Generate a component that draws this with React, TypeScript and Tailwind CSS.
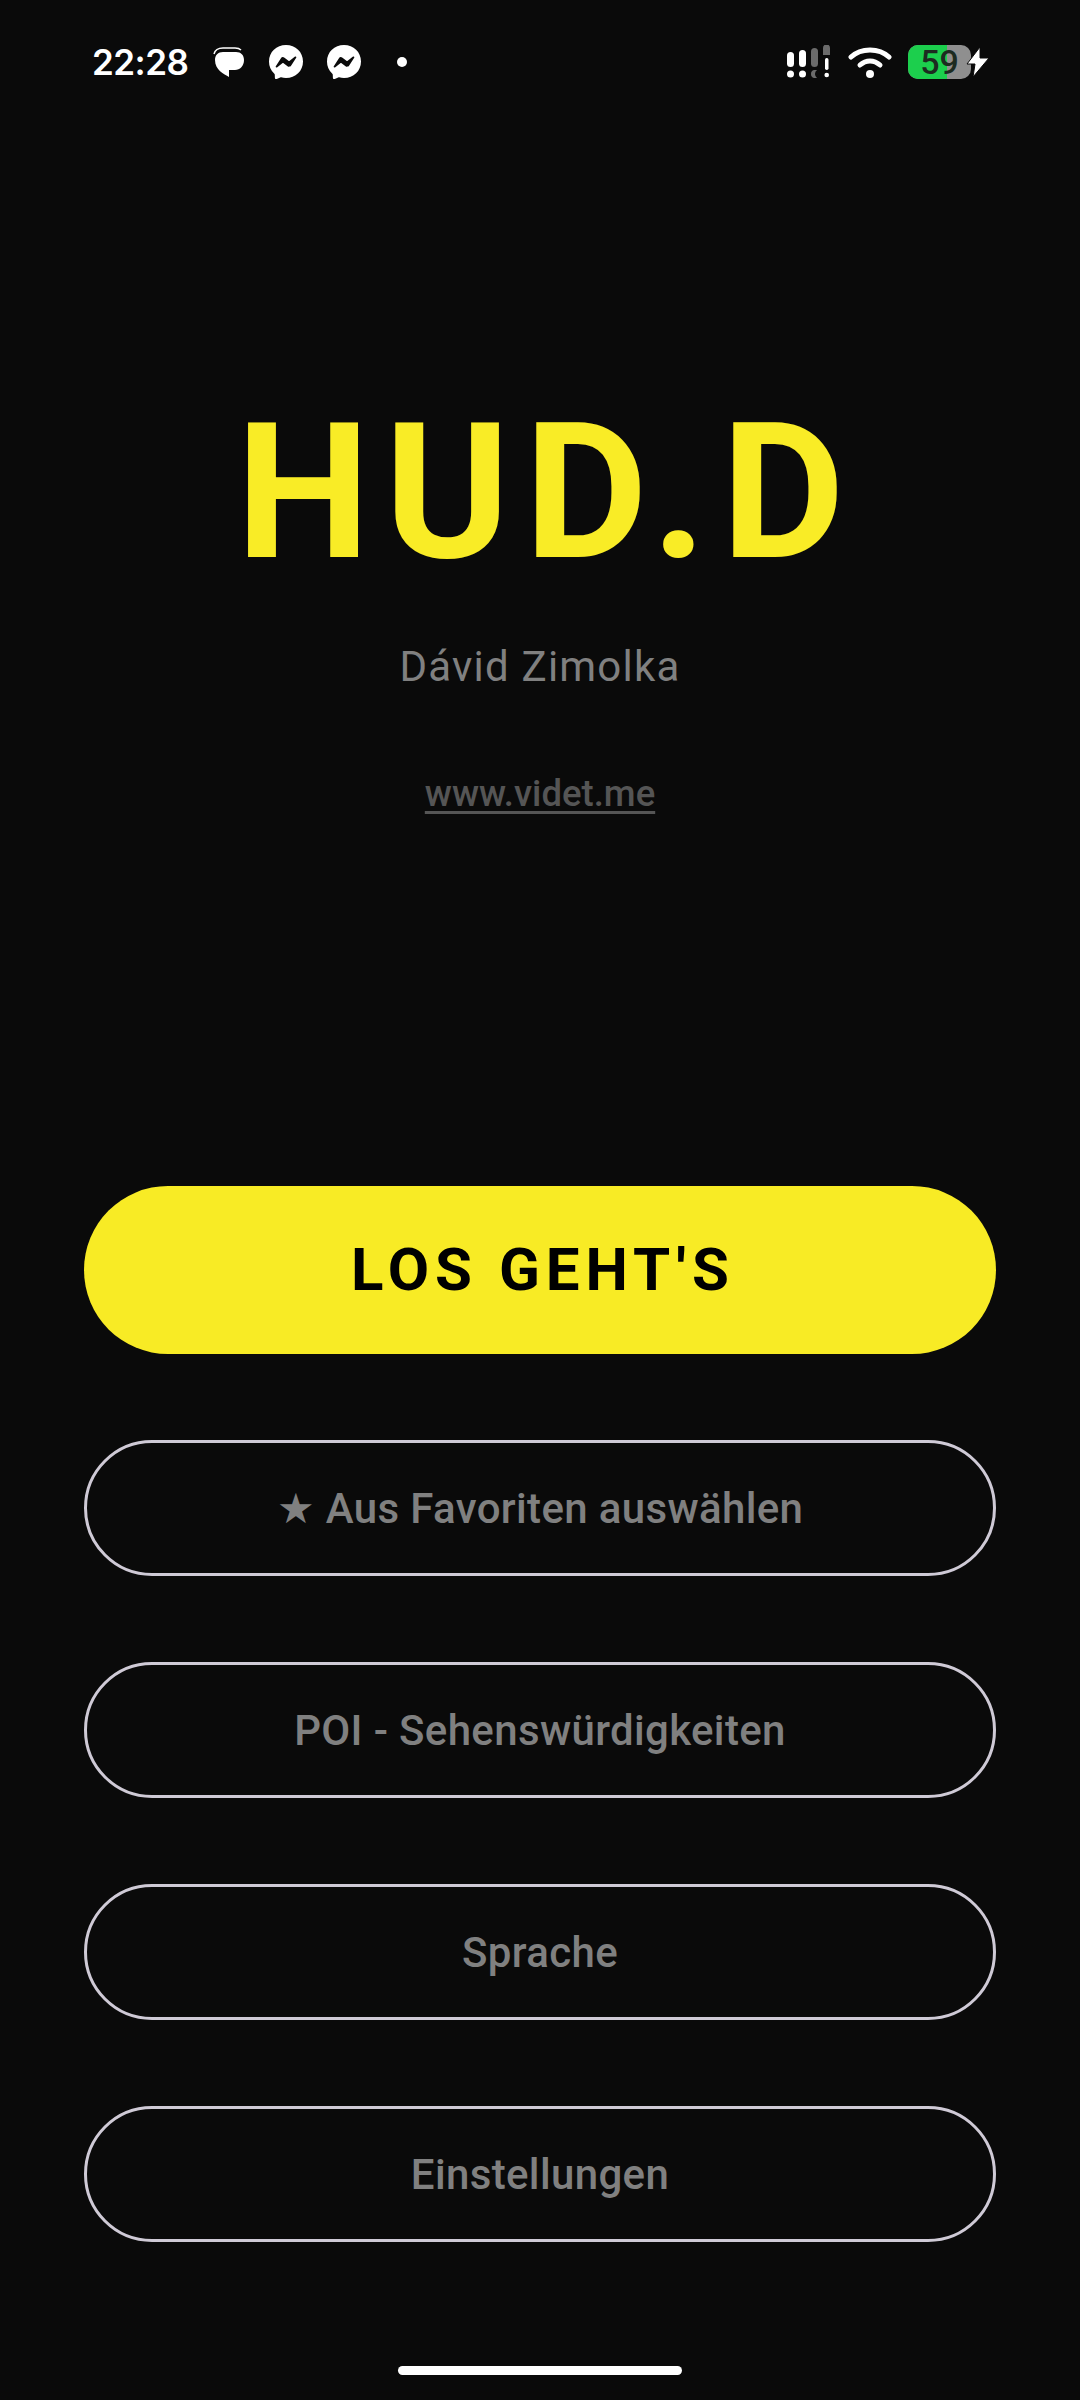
import React from 'react';
import { SiMessenger } from 'react-icons/si';

const SignalIcon = () => (
    <svg width="44" height="34" viewBox="0 0 44 34" fill="none">
        <rect x="1" y="7" width="7" height="15" rx="3.5" fill="#fff" />
        <circle cx="4.5" cy="29" r="3.5" fill="#fff" />
        <rect x="13" y="5" width="7" height="17" rx="3.5" fill="#fff" />
        <circle cx="16.5" cy="29" r="3.5" fill="#fff" />
        <rect x="25" y="3" width="7" height="19" rx="3.5" fill="#6b6b6b" />
        <path d="M31 25 a5 5 0 0 0 0 8 l-3 0 a4 4 0 0 1 -3 -4 a4 4 0 0 1 3 -4 z" fill="#6b6b6b" />
        <path d="M37 3 a3.5 3.5 0 0 1 7 0 v7 h-7 z" fill="#6b6b6b" />
        <rect x="39" y="13" width="3.5" height="12" rx="1.7" fill="#fff" />
        <circle cx="40.7" cy="30" r="2.3" fill="#fff" />
    </svg>
);

const WifiIcon = () => (
    <svg width="44" height="34" viewBox="0 0 44 34" fill="none" stroke="#fff" strokeWidth="5" strokeLinecap="round">
        <path d="M3 12 C13 2.5 31 2.5 41 12" />
        <path d="M12 20 C18 14.5 26 14.5 32 20" />
        <circle cx="22" cy="29" r="4" fill="#fff" stroke="none" />
    </svg>
);

const BubbleIcon = () => (
    <svg width="32" height="33" viewBox="0 0 32 33" fill="none">
        <path d="M1 8 C2 4 5 2 10 2 H22 C25 2 27 3 28 4" stroke="#fff" strokeWidth="1.5" />
        <path d="M10 6 H23 C28 6 31 9 31 14 C31 20 27 24 22 24 H16 V31 C11 28 2 24 2 14 C2 9 5 6 10 6 Z" fill="#fff" />
    </svg>
);

const BoltIcon = () => (
    <svg width="24" height="30" viewBox="0 0 24 30" fill="#fff" stroke="#0a0a0a" strokeWidth="1">
        <path d="M14 0 L1 17 H9 L7 30 L23 11 H14 Z" />
    </svg>
);

const StatusBar = () => (
    <div className="flex h-[34px] items-center justify-between pl-[92px] pr-[90px] mt-[45px]">
        <div className="flex items-center">
            <span className="w-[95px] text-[35px] font-semibold leading-none text-white tracking-[-0.5px] font-['Inter',sans-serif]">22:28</span>
            <span className="ml-[26px]"><BubbleIcon /></span>
            <SiMessenger size={34} className="ml-[24px] text-white" />
            <SiMessenger size={34} className="ml-[24px] text-white" />
            <span className="ml-[36px] h-[10px] w-[10px] rounded-full bg-white" />
        </div>
        <div className="flex items-center">
            <SignalIcon />
            <span className="ml-[18px]"><WifiIcon /></span>
            <div className="relative ml-[16px] flex h-[34px] w-[63px] items-center justify-center rounded-[10px] bg-[#8f8f8f]">
                <div className="absolute inset-y-0 left-0 w-[39px] rounded-l-[10px] bg-[#1ccf4d]" />
                <span className="relative text-[34px] font-medium leading-none text-[#1d2b20] font-['Roboto',sans-serif]">59</span>
            </div>
            <span className="-ml-[5px] relative"><BoltIcon /></span>
        </div>
    </div>
);

const OutlineButton: React.FC<{ children: React.ReactNode }> = ({ children }) => (
    <button className="flex h-[136px] w-full items-center justify-center rounded-full border-[3px] border-[#cfcad6] text-[42px] font-medium tracking-[0.35px] text-[#808080]">
        {children}
    </button>
);

export default function App() {
    return (
        <div className="flex h-[2400px] w-[1080px] flex-col overflow-hidden bg-[#0a0a0a] font-['Roboto',sans-serif]">
            <StatusBar />

            <div className="mt-[318px] flex flex-col items-center">
                <h1 className="pl-[15px] text-[190px] font-[750] leading-[190px] tracking-[14.5px] text-[#f9ec26]">HUD.D</h1>
                <p className="mt-[55px] text-[42px] leading-[50px] tracking-[1.2px] text-[#808080]">Dávid Zimolka</p>
                <a className="mt-[81px] text-[36.5px] font-medium leading-[42px] text-[#555555] underline underline-offset-[5px]">www.videt.me</a>
            </div>

            <div className="mt-[371px] flex flex-col gap-[86px] px-[84px]">
                <button className="h-[168px] w-full rounded-full bg-[#f8eb25] pl-[6px] text-[60px] font-bold tracking-[6px] text-black">LOS GEHT'S</button>
                <OutlineButton>★ Aus Favoriten auswählen</OutlineButton>
                <OutlineButton>POI - Sehenswürdigkeiten</OutlineButton>
                <OutlineButton>Sprache</OutlineButton>
                <OutlineButton>Einstellungen</OutlineButton>
            </div>

            <div className="mx-auto mt-[124px] h-[9px] w-[284px] rounded-full bg-white" />
        </div>
    );
}
